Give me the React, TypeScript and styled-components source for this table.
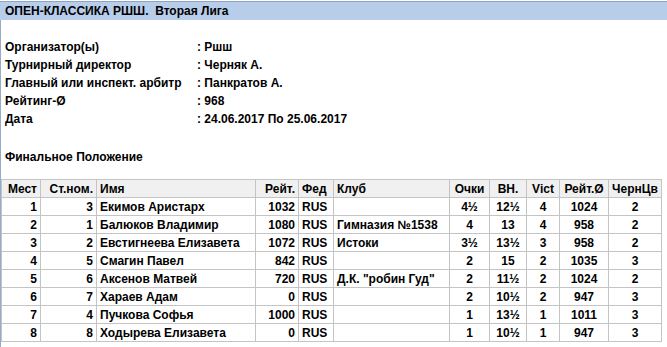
import React from 'react';
import styled, { createGlobalStyle } from 'styled-components';

const GlobalStyle = createGlobalStyle`
  html, body {
    margin: 0;
    padding: 0;
    background: #ffffff;
  }
  body {
    font-family: "Liberation Sans", Arial, sans-serif;
    font-size: 12px;
    font-weight: bold;
    color: #000000;
  }
`;

const INFO = [
  ['Организатор(ы)', ': Ршш'],
  ['Турнирный директор', ': Черняк А.'],
  ['Главный или инспект. арбитр', ': Панкратов А.'],
  ['Рейтинг-Ø', ': 968'],
  ['Дата', ': 24.06.2017 По 25.06.2017'],
];

type Align = 'left' | 'right' | 'center';

const COLUMNS: { title: string; width: number; align: Align }[] = [
  { title: 'Мест', width: 39, align: 'right' },
  { title: 'Ст.ном.', width: 56, align: 'right' },
  { title: 'Имя', width: 159, align: 'left' },
  { title: 'Рейт.', width: 43, align: 'right' },
  { title: 'Фед', width: 35, align: 'left' },
  { title: 'Клуб', width: 116, align: 'left' },
  { title: 'Очки', width: 40, align: 'center' },
  { title: 'ВН.', width: 37, align: 'center' },
  { title: 'Vict', width: 33, align: 'center' },
  { title: 'Рейт.Ø', width: 49, align: 'center' },
  { title: 'ЧернЦв', width: 53, align: 'center' },
];

const ROWS = [
  ['1', '3', 'Екимов Аристарх', '1032', 'RUS', '', '4½', '12½', '4', '1024', '2'],
  ['2', '1', 'Балюков Владимир', '1080', 'RUS', 'Гимназия №1538', '4', '13', '4', '958', '2'],
  ['3', '2', 'Евстигнеева Елизавета', '1072', 'RUS', 'Истоки', '3½', '13½', '3', '958', '2'],
  ['4', '5', 'Смагин Павел', '842', 'RUS', '', '2', '15', '2', '1035', '3'],
  ['5', '6', 'Аксенов Матвей', '720', 'RUS', 'Д.К. "робин Гуд"', '2', '11½', '2', '1024', '2'],
  ['6', '7', 'Хараев Адам', '0', 'RUS', '', '2', '10½', '2', '947', '3'],
  ['7', '4', 'Пучкова Софья', '1000', 'RUS', '', '1', '13½', '1', '1011', '3'],
  ['8', '8', 'Ходырева Елизавета', '0', 'RUS', '', '1', '10½', '1', '947', '3'],
];

export default function App() {
  return (
    <>
      <GlobalStyle />
      <TitleBar>ОПЕН-КЛАССИКА РШШ.&nbsp; Вторая Лига</TitleBar>
      <Page>
        <InfoList>
          {INFO.map(([label, value]) => (
            <InfoRow key={label}>
              <span>{label}</span>
              <span>{value}</span>
            </InfoRow>
          ))}
        </InfoList>
        <SectionTitle>Финальное Положение</SectionTitle>
        <Standings>
          <colgroup>
            {COLUMNS.map((c) => (
              <col key={c.title} style={{ width: c.width }} />
            ))}
          </colgroup>
          <thead>
            <tr>
              {COLUMNS.map((c) => (
                <HeadCell key={c.title} $align={c.align}>
                  {c.title}
                </HeadCell>
              ))}
            </tr>
          </thead>
          <tbody>
            {ROWS.map((row) => (
              <tr key={row[0]}>
                {row.map((v, i) => (
                  <Cell key={i} $align={COLUMNS[i].align}>
                    {v}
                  </Cell>
                ))}
              </tr>
            ))}
          </tbody>
        </Standings>
      </Page>
    </>
  );
}

const TitleBar = styled.div`
  height: 18px;
  line-height: 18px;
  padding-left: 5px;
  background: #b8cdea;
  border-top: 1px solid #8ea4c2;
  margin-top: 1px;
  white-space: nowrap;
`;

const Page = styled.div`
  border-left: 1px solid #94abca;
  min-height: 327px;
  box-sizing: border-box;
  padding-top: 18px;
`;

const InfoList = styled.div`
  display: flex;
  flex-direction: column;
  padding-left: 4px;
`;

const InfoRow = styled.div`
  display: grid;
  grid-template-columns: 192px 1fr;
  height: 18px;
  line-height: 18px;
  white-space: nowrap;
`;

const SectionTitle = styled.div`
  padding-left: 4px;
  margin-top: 20px;
  height: 18px;
  line-height: 18px;
`;

const Standings = styled.table`
  margin-top: 13px;
  border-collapse: collapse;
  table-layout: fixed;
  width: 660px;
`;

const HeadCell = styled.th<{ $align: Align }>`
  height: 17px;
  padding: 0 3px;
  background: #f0f0f0;
  border: 1px solid #c4c4c4;
  text-align: ${(p) => p.$align};
  font-weight: bold;
  white-space: nowrap;
  overflow: hidden;
`;

const Cell = styled.td<{ $align: Align }>`
  height: 17px;
  padding: 0 3px;
  border: 1px solid #c4c4c4;
  text-align: ${(p) => p.$align};
  white-space: nowrap;
  overflow: hidden;
`;
